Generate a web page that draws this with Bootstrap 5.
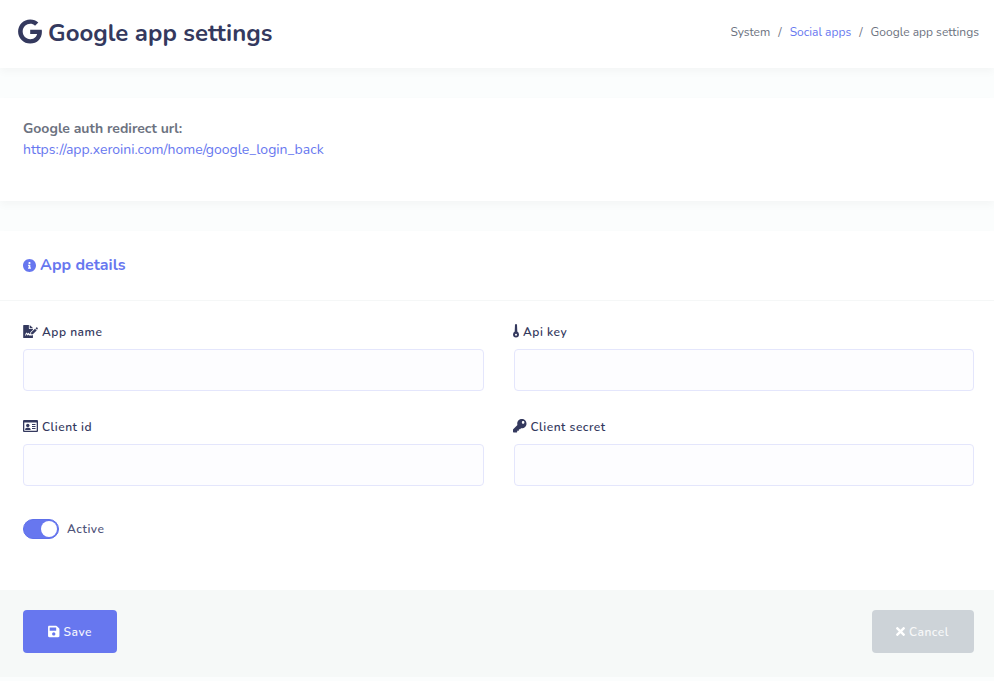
<!DOCTYPE html>
<html lang="en">
<head>
<meta charset="utf-8">
<meta name="viewport" content="width=device-width, initial-scale=1">
<title>Google app settings</title>
<link href="https://cdn.jsdelivr.net/npm/bootstrap@5.3.0/dist/css/bootstrap.min.css" rel="stylesheet">
<style>
body{font-family:Nunito,Lato,sans-serif;font-size:14px;line-height:21px;color:#6c7280;background:#fbfdfd;overflow:hidden;-webkit-font-smoothing:antialiased}
a{color:#6777ef;text-decoration:none}
svg{fill:currentColor;display:block;flex:none}
.panel{background:#fff;box-shadow:0 4px 8px rgba(0,0,0,.03)}
.page-head{height:68px;padding:0 15px 4px 18px}
.page-title{font-size:24px;font-weight:700;color:#34395e;line-height:28px}
.page-title svg{margin:0 6px 2px 0}
.page-title span{padding-top:2px}
.crumbs{font-size:12px;line-height:18px}
.redirect{height:103px;margin-top:30px;padding:20px 23px}
.details{margin-top:30px}
.details-head{height:70px;padding:0 23px 2px;border-bottom:1px solid #f5f7f7}
.details-title{font-size:16px;font-weight:700;color:#6777ef;line-height:28px}
.details-title svg{margin-top:1px}
.details-body{height:289px;padding:20px 20px 0 23px}
.fields{--bs-gutter-x:30px}
.field-label{font-size:12px;font-weight:600;color:#34395e;letter-spacing:.5px;height:20px;margin-bottom:8px;line-height:20px}
.field-label span{padding-top:2px;line-height:20px}
.api-icon,.key-icon{margin-left:-.5px}
.field{height:42px;background:#fdfdff;border-color:#e4e6fc;border-radius:4px}
.field-group{margin-bottom:25px}
.toggle{width:36px;height:20px;border-radius:10px;background:#6777ef;border:1px solid #5f70ea;padding:1px}
.knob{width:16px;height:16px;border-radius:50%;background:#fff}
.toggle-row{margin-top:7px}
.toggle-text{font-size:12px;font-weight:600;color:#50547a;letter-spacing:.5px;padding-top:1px}
.actions{background:#f6f9f8;height:87px;padding:20px 20px 0 23px}
.action{height:43px;border:0;border-radius:4px;color:#fff;font-size:12px;font-weight:600;letter-spacing:.5px}
.save,.save:hover{width:94px;background:#6777ef;color:#fff}
.cancel,.cancel:hover{width:102px;background:#cdd3d8;color:#fff}
.cancel{padding:0 1px 0 0}
.cancel span{opacity:.85}
.save span{opacity:.92}
</style>
</head>
<body>
<header class="panel page-head d-flex justify-content-between align-items-center">
 <h1 class="page-title d-flex align-items-center mb-0"><svg width="24" height="25" viewBox="0 0 488 512"><path d="M488 261.8C488 403.3 391.1 504 248 504 110.8 504 0 393.2 0 256S110.8 8 248 8c66.8 0 123 24.5 166.3 64.9l-67.5 64.9C258.5 52.6 94.3 116.6 94.3 256c0 86.5 69.1 156.6 153.7 156.6 98.2 0 135-70.4 140.8-106.9H248v-85.3h236.1c2.3 12.7 3.9 24.9 3.9 41.4z"/></svg><span>Google app settings</span></h1>
 <nav class="crumbs d-flex gap-2"><span>System</span><span>/</span><a href="#">Social apps</a><span>/</span><span>Google app settings</span></nav>
</header>
<section class="panel redirect">
 <div><b>Google auth redirect url:</b></div>
 <a href="#">https://app.xeroini.com/home/google_login_back</a>
</section>
<form class="panel details">
 <div class="details-head d-flex align-items-center">
  <h2 class="details-title d-flex align-items-center mb-0"><svg width="13" height="13" viewBox="8 8 496 496"><path d="M256 8C119.043 8 8 119.083 8 256c0 136.997 111.043 248 248 248s248-111.003 248-248C504 119.083 392.957 8 256 8zm0 110c23.196 0 42 18.804 42 42s-18.804 42-42 42-42-18.804-42-42 18.804-42 42-42zm56 254c0 6.627-5.373 12-12 12h-88c-6.627 0-12-5.373-12-12v-24c0-6.627 5.373-12 12-12h12v-64h-12c-6.627 0-12-5.373-12-12v-24c0-6.627 5.373-12 12-12h64c6.627 0 12 5.373 12 12v100h12c6.627 0 12 5.373 12 12v24z"/></svg><span class="ms-1">App details</span></h2>
 </div>
 <div class="details-body">
  <div class="row fields">
   <div class="col-6 field-group"><label class="field-label d-flex align-items-center" for="name"><svg class="me-1" width="15" height="13" viewBox="0 0 576 512"><path fill-rule="evenodd" d="M24 0H224V136q0 24 24 24H384V190L280 290V355H270Q240 350 225 320Q205 290 180 318L165 355L150 315Q128 275 108 315L88 370Q84 384 72 384V416H96Q118 407 123 380L137 340L156 398Q170 425 188 400L202 370Q220 416 270 416H355L384 386V488Q384 512 360 512H24Q0 512 0 488V24Q0 0 24 0ZM256 0L384 122V128H256ZM312 300L465 148L532 215L380 368H312ZM487 126L516 97Q535 85 552 102L570 120Q584 137 568 155L545 184Z"/></svg><span>App name</span></label><input id="name" class="form-control field"></div>
   <div class="col-6 field-group"><label class="field-label d-flex align-items-center" for="api"><svg class="api-icon me-1" width="6" height="14" viewBox="0 0 6 14"><path fill-rule="evenodd" d="M2 0.500L3 0L4 0.500L4.300 7.500Q6 8.500 6 10.500Q6 13.500 3 13.500T0 10.500Q0 8.500 1.700 7.500ZM3 9.700A1 1 0 1 0 3 11.700A1 1 0 1 0 3 9.700Z"/></svg><span>Api key</span></label><input id="api" class="form-control field"></div>
   <div class="col-6 field-group"><label class="field-label d-flex align-items-center" for="client"><svg class="me-1" width="15" height="12" viewBox="0 0 15 12"><path fill-rule="evenodd" d="M1 0H14Q15 0 15 1V11Q15 12 14 12H1Q0 12 0 11V1Q0 0 1 0ZM1.300 2.500V10.700H13.700V2.500Z"/><circle cx="4.800" cy="5.500" r="1.700"/><path d="M2 10Q2 7.700 4 7.700H5.700Q7.700 7.700 7.700 10ZM9 4H12.500V5H9ZM9 6H12.500V7H9ZM9 8H12.500V9H9Z"/></svg><span>Client id</span></label><input id="client" class="form-control field"></div>
   <div class="col-6 field-group"><label class="field-label d-flex align-items-center" for="secret"><svg class="key-icon me-1" width="13.500" height="13.500" viewBox="0 0 512 512"><path d="M512 176.001C512 273.203 433.202 352 336 352c-11.22 0-22.19-1.062-32.827-3.069l-24.012 27.014A23.999 23.999 0 0 1 261.223 384H224v40c0 13.255-10.745 24-24 24h-40v40c0 13.255-10.745 24-24 24H24c-13.255 0-24-10.745-24-24v-78.059c0-6.365 2.529-12.47 7.029-16.971l161.802-161.802C163.108 213.814 160 195.271 160 176 160 78.798 238.797.001 335.999 0 433.488-.001 512 78.511 512 176.001zM336 128c0 26.51 21.49 48 48 48s48-21.49 48-48-21.49-48-48-48-48 21.49-48 48z"/></svg><span>Client secret</span></label><input id="secret" class="form-control field"></div>
  </div>
  <div class="toggle-row d-flex align-items-center gap-2"><span class="toggle d-flex justify-content-end" role="switch" aria-checked="true"><span class="knob"></span></span><span class="toggle-text">Active</span></div>
 </div>
 <div class="actions d-flex justify-content-between">
  <button type="button" class="btn action save d-flex align-items-center justify-content-center p-0"><svg class="me-1" width="11.500" height="13" viewBox="0 0 448 512"><path d="M433.941 129.941l-83.882-83.882A48 48 0 0 0 316.118 32H48C21.49 32 0 53.49 0 80v352c0 26.51 21.49 48 48 48h352c26.51 0 48-21.49 48-48V163.882a48 48 0 0 0-14.059-33.941zM224 416c-35.346 0-64-28.654-64-64 0-35.346 28.654-64 64-64s64 28.654 64 64c0 35.346-28.654 64-64 64zm96-304.52V212c0 6.627-5.373 12-12 12H76c-6.627 0-12-5.373-12-12V108c0-6.627 5.373-12 12-12h228.52c3.183 0 6.235 1.264 8.485 3.515l3.48 3.48A11.996 11.996 0 0 1 320 111.48z"/></svg><span>Save</span></button>
  <button type="button" class="btn action cancel d-flex align-items-center justify-content-center"><svg class="me-1" width="9" height="13" viewBox="0 0 352 512"><path d="M242.72 256l100.07-100.07c12.28-12.28 12.28-32.19 0-44.48l-22.24-22.24c-12.28-12.28-32.19-12.28-44.48 0L176 189.28 75.93 89.21c-12.28-12.28-32.19-12.28-44.48 0L9.21 111.45c-12.28 12.28-12.28 32.19 0 44.48L109.28 256 9.21 356.07c-12.28 12.28-12.28 32.19 0 44.48l22.24 22.24c12.28 12.28 32.2 12.28 44.48 0L176 322.72l100.07 100.07c12.28 12.28 32.2 12.28 44.48 0l22.24-22.24c12.28-12.28 12.28-32.19 0-44.48L242.72 256z"/></svg><span>Cancel</span></button>
 </div>
</form>
<script src="https://cdn.jsdelivr.net/npm/bootstrap@5.3.0/dist/js/bootstrap.bundle.min.js"></script>
</body>
</html>
